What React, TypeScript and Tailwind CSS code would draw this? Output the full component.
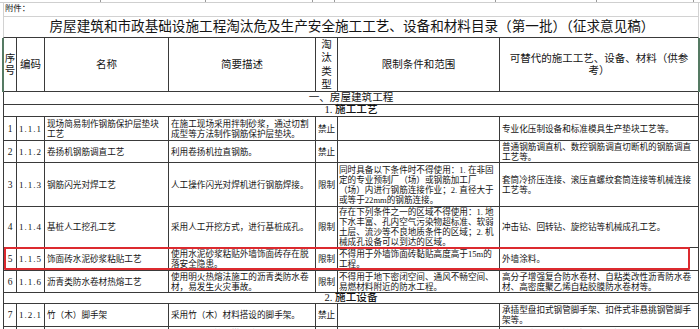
import React from "react";

type Row = {
  h: string;
  n: string;
  code: string;
  name: string[];
  desc: string[];
  type: string;
  limit: string[];
  alt: string[];
};

const rows1: Row[] = [
  {
    h: "h-[24px]",
    n: "1",
    code: "1.1.1",
    name: ["现场简易制作钢筋保护层垫块", "工艺"],
    desc: ["在施工现场采用拌制砂浆，通过切割", "成型等方法制作钢筋保护层垫块。"],
    type: "禁止",
    limit: [],
    alt: ["专业化压制设备和标准模具生产垫块工艺等。"],
  },
  {
    h: "h-[22px]",
    n: "2",
    code: "1.1.2",
    name: ["卷扬机钢筋调直工艺"],
    desc: ["利用卷扬机拉直钢筋。"],
    type: "禁止",
    limit: [],
    alt: ["普通钢筋调直机、数控钢筋调直切断机的钢筋调直", "工艺等。"],
  },
  {
    h: "h-[44px]",
    n: "3",
    code: "1.1.3",
    name: ["钢筋闪光对焊工艺"],
    desc: ["人工操作闪光对焊机进行钢筋焊接。"],
    type: "限制",
    limit: [
      "同时具备以下条件时不得使用：1. 在非固",
      "定的专业预制厂（场）或钢筋加工厂",
      "（场）内进行钢筋连接作业；2. 直径大于",
      "或等于22mm的钢筋连接。",
    ],
    alt: ["套筒冷挤压连接、滚压直螺纹套筒连接等机械连接", "工艺等。"],
  },
  {
    h: "h-[41px]",
    n: "4",
    code: "1.1.4",
    name: ["基桩人工挖孔工艺"],
    desc: ["采用人工开挖方式，进行基桩成孔。"],
    type: "限制",
    limit: [
      "存在下列条件之一的区域不得使用：1. 地",
      "下水丰富、孔内空气污染物超标准、软弱",
      "土层、流沙等不良地质条件的区域；2. 机",
      "械成孔设备可以到达的区域。",
    ],
    alt: ["冲击钻、回转钻、旋挖钻等机械成孔工艺。"],
  },
  {
    h: "h-[23px]",
    n: "5",
    code: "1.1.5",
    name: ["饰面砖水泥砂浆粘贴工艺"],
    desc: ["使用水泥砂浆粘贴外墙饰面砖存在脱", "落安全隐患。"],
    type: "限制",
    limit: ["不得用于外墙饰面砖黏贴高度高于15m的", "工程。"],
    alt: ["外墙涂料。"],
  },
  {
    h: "h-[22px]",
    n: "6",
    code: "1.1.6",
    name: ["沥青类防水卷材热熔工艺"],
    desc: ["使用明火热熔法施工的沥青类防水卷", "材，易发生火灾事故。"],
    type: "限制",
    limit: ["不得用于地下密闭空间、通风不畅空间、", "易燃材料附近的防水工程。"],
    alt: ["高分子增强复合防水卷材、自粘类改性沥青防水卷", "材、高密度聚乙烯自粘胶膜防水卷材等。"],
  },
];

const rows2: Row[] = [
  {
    h: "h-[23px]",
    n: "7",
    code: "1.2.1",
    name: ["竹（木）脚手架"],
    desc: ["采用竹（木）材料搭设的脚手架。"],
    type: "禁止",
    limit: [],
    alt: ["承插型盘扣式钢管脚手架、扣件式非悬挑钢管脚手", "架等。"],
  },
  {
    h: "h-[24px]",
    n: "8",
    code: "1.2.2",
    name: ["门式钢管支撑架"],
    desc: ["采用门式钢管架搭设的用于混凝土结构", "施工的支撑架。"],
    type: "限制",
    limit: ["不得用于搭设满堂承重支撑架体系。"],
    alt: ["承插型盘扣式钢管支撑架、钢管柱梁式支架、移动", "模架等。"],
  },
];

const GRID =
  "grid grid-cols-[13px_28px_124px_147px_22px_162px_199px] border-b border-[#3a3a3a]";
const CELL = "border-r border-[#3a3a3a] overflow-hidden flex flex-col justify-center";

function Lines({ lines }: { lines: string[] }) {
  return (
    <>
      {lines.map((l, i) => (
        <div key={i} className="whitespace-nowrap">
          {l}
        </div>
      ))}
    </>
  );
}

function DataRow({ r }: { r: Row }) {
  return (
    <div className={`${GRID} ${r.h} text-[8.6px] leading-[10px] text-[#141414]`}>
      <div className={`${CELL} items-center text-[9.5px]`}>{r.n}</div>
      <div className={`${CELL} items-center text-[9px] tracking-[1px]`}>{r.code}</div>
      <div className={`${CELL} pl-[2px]`}>
        <Lines lines={r.name} />
      </div>
      <div className={`${CELL} pl-[2px]`}>
        <Lines lines={r.desc} />
      </div>
      <div className={`${CELL} items-center`}>{r.type}</div>
      <div className={`${CELL} pl-[1px]`}>
        <Lines lines={r.limit} />
      </div>
      <div className={`${CELL} pl-[2px]`}>
        <Lines lines={r.alt} />
      </div>
    </div>
  );
}

function Stub() {
  const ticks = [
    "w-[101px]",
    "w-[105px]",
    "w-[107px]",
    "w-[22px]",
    "w-[161px]",
    "w-[101px]",
    "w-[97px]",
  ];
  return (
    <div className="flex h-[3px] border-b border-[#cfcfcf]">
      {ticks.map((t, i) => (
        <div key={i} className={`${t} border-r border-[#9a9a9a]`} />
      ))}
    </div>
  );
}

export default function App() {
  return (
    <div className="relative w-[700px] h-[329px] overflow-hidden bg-white text-[#141414] [font-family:'Liberation_Serif','Noto_Sans_CJK_SC',serif]">
      <Stub />
      {/* attachment line */}
      <div className="ml-[3px] w-[696px] h-[14px] border-l border-r border-b border-[#d2d2d2] flex items-center pl-[1px] text-[8.4px]">
        附件：
      </div>
      {/* title */}
      <div className="ml-[3px] w-[696px] h-[21px] border-l border-r border-[#d2d2d2] border-b border-b-[#3a3a3a] flex items-center justify-center text-[13.6px] leading-none pb-[1px] pl-[2px]">
        房屋建筑和市政基础设施工程淘汰危及生产安全施工工艺、设备和材料目录（第一批）（征求意见稿）
      </div>

      {/* table */}
      <div className="ml-[3px] w-[696px] border-l border-[#3a3a3a]">
        {/* header */}
        <div className={`${GRID} relative h-[54px] text-[10.5px] leading-[12px]`}>
          <div className={`${CELL} items-center`}>
            <Lines lines={["序", "号"]} />
          </div>
          <div className={`${CELL} items-center`}>编码</div>
          <div className={`${CELL} items-center`}>名称</div>
          <div className={`${CELL} items-center`}>简要描述</div>
          <div className={`${CELL} items-center leading-[13.5px]`}>
            <Lines lines={["淘", "汰", "类", "型"]} />
          </div>
          <div className={`${CELL} items-center`}>限制条件和范围</div>
          <div className={`${CELL} items-center text-center`}>
            <Lines lines={["可替代的施工工艺、设备、材料（供参", "考）"]} />
          </div>
          <div className="absolute left-[-2px] top-0 bottom-[-1px] w-[2px] bg-[#557a63]" />
          <div className="absolute right-[-1px] top-0 bottom-[-1px] w-[2px] bg-[#557a63]" />
        </div>

        <div className="h-[13px] border-b border-[#3a3a3a] border-r flex items-center justify-center text-[10.6px] leading-none">
          一、房屋建筑工程
        </div>
        <div className="h-[12px] border-b border-r border-[#3a3a3a] flex items-center justify-center text-[10.6px] leading-none font-medium">
          1. 施工工艺
        </div>

        {rows1.map((r) => (
          <DataRow key={r.code} r={r} />
        ))}

        <div className="h-[11px] border-b border-r border-[#3a3a3a] flex items-center justify-center text-[10.6px] leading-none font-medium">
          2. 施工设备
        </div>

        {rows2.map((r) => (
          <DataRow key={r.code} r={r} />
        ))}
      </div>

      {/* annotation box */}
      <div className="absolute left-[4px] top-[247px] w-[686px] h-[23px] border-2 border-[#dc2a2f] rounded-[1px]" />
    </div>
  );
}
